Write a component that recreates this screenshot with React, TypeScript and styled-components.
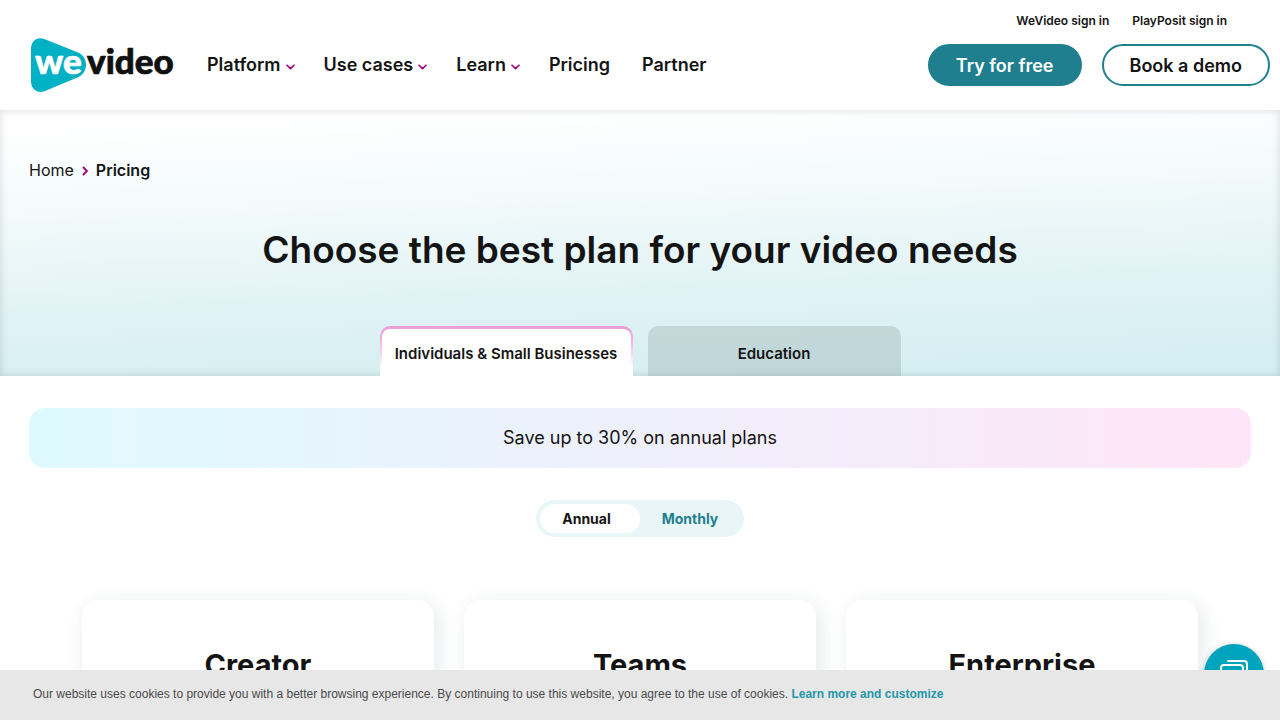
import React from 'react';
import styled, { createGlobalStyle } from 'styled-components';

const GlobalStyle = createGlobalStyle`
  * { box-sizing: border-box; }
  body {
    margin: 0;
    background: #fff;
    color: #141414;
    font-family: Inter, "Liberation Sans", sans-serif;
  }
  a { color: inherit; text-decoration: none; }
  button { font-family: inherit; color: inherit; cursor: pointer; }
`;

const Header = styled.header`
  display: flex;
  align-items: flex-start;
  height: 110px;
  padding: 0 10px 0 29px;
`;

const LogoLink = styled.a`
  display: block;
  margin: 36px 32px 0 0;
  svg { display: block; }
`;

const Nav = styled.nav`
  display: flex;
  gap: 32px;
  margin-top: 52px;
`;

const NavItem = styled.a<{ $menu?: boolean }>`
  display: flex;
  align-items: center;
  gap: 5px;
  margin-right: ${(p) => (p.$menu ? '-3px' : '0')};
  font-size: 18px;
  font-weight: 600;
  line-height: 26px;
  white-space: nowrap;
  svg { margin-top: 4px; }
`;

const HeaderSide = styled.div`
  margin-left: auto;
  display: flex;
  flex-direction: column;
  gap: 15px;
  padding-top: 13px;
`;

const SignIns = styled.div`
  display: flex;
  justify-content: flex-end;
  gap: 23px;
  padding-right: 43px;
  font-size: 12px;
  font-weight: 600;
  line-height: 16px;
`;

const Actions = styled.div`
  display: flex;
  justify-content: flex-end;
  gap: 20px;
`;

const PillButton = styled.button<{ $solid?: boolean }>`
  height: 42px;
  padding: 2px 26px 0;
  border: 2px solid #1f7f8e;
  border-radius: 21px;
  background: ${(p) => (p.$solid ? '#1f7f8e' : '#fff')};
  color: ${(p) => (p.$solid ? '#fff' : '#141414')};
  font-size: 18px;
  font-weight: 600;
  line-height: 24px;
  white-space: nowrap;
`;

const Hero = styled.section`
  display: flex;
  flex-direction: column;
  height: 266px;
  background: linear-gradient(178deg, #fff 6%, #f2fafb 35%, #e0f2f5 68%, #d5eff2 95%);
  box-shadow: inset 0 0 8px rgba(0, 0, 0, 0.14);
`;

const Breadcrumb = styled.nav`
  display: flex;
  align-items: center;
  gap: 8px;
  padding: 48px 29px 0;
  font-size: 16px;
  line-height: 24px;
  svg { margin-top: 2px; }
`;

const Current = styled.span`
  font-weight: 600;
`;

const Title = styled.h1`
  margin: 42px 0 0;
  text-align: center;
  font-size: 37px;
  font-weight: 600;
  line-height: 52px;
`;

const Tabs = styled.div`
  display: flex;
  justify-content: center;
  gap: 15px;
  margin-top: auto;
`;

const Tab = styled.button<{ $active?: boolean }>`
  width: 253px;
  height: 50px;
  padding: ${(p) => (p.$active ? '3px 2px 0' : '4px 0 0')};
  border: 0;
  border-radius: 10px 10px 0 0;
  background: ${(p) =>
    p.$active ? 'linear-gradient(#e99fd6, #f3b5e2 30%, #fff 85%)' : 'rgba(143, 158, 158, 0.3)'};
  font-size: 15px;
  font-weight: 600;
`;

const TabFace = styled.span`
  display: flex;
  align-items: center;
  justify-content: center;
  height: 100%;
  padding-top: 1px;
  border-radius: 8px 8px 0 0;
  background: #fff;
  white-space: nowrap;
`;

const Plans = styled.main`
  padding: 32px 29px 0;
`;

const Banner = styled.p`
  margin: 0;
  padding: 17px;
  border-radius: 16px;
  background: linear-gradient(90deg, #defaff, #ffe5f7);
  text-align: center;
  font-size: 18px;
  line-height: 26px;
`;

const Billing = styled.div`
  display: grid;
  grid-template-columns: 1fr 1fr;
  width: 208px;
  height: 37px;
  margin: 32px auto 0;
  padding: 4px;
  border-radius: 19px;
  background: #e8f6f7;
`;

const BillingOption = styled.button<{ $active?: boolean }>`
  padding: ${(p) => (p.$active ? '0 7px 0 0' : '0')};
  border: 0;
  border-radius: 15px;
  background: ${(p) => (p.$active ? '#fff' : 'transparent')};
  color: ${(p) => (p.$active ? '#141414' : '#1f7f8e')};
  font-size: 14px;
  font-weight: 700;
`;

const Cards = styled.div`
  display: grid;
  grid-template-columns: repeat(3, 1fr);
  gap: 30px;
  margin: 63px 53px 0;
`;

const Card = styled.article`
  height: 320px;
  padding-top: 44px;
  border-radius: 16px;
  background: #fff;
  box-shadow: 4px 4px 20px rgba(30, 80, 90, 0.12);
`;

const PlanName = styled.h2`
  margin: 0;
  text-align: center;
  font-size: 29px;
  font-weight: 700;
  line-height: 42px;
`;

const ChatButton = styled.button`
  position: fixed;
  right: 16px;
  bottom: 16px;
  width: 60px;
  height: 60px;
  padding: 0;
  border: 0;
  border-radius: 50%;
  background: #00a4bd;
  box-shadow: 0 1px 6px rgba(0, 0, 0, 0.2);
  svg { display: block; margin: auto; }
`;

const CookieBar = styled.aside`
  position: fixed;
  left: 0;
  right: 0;
  bottom: 0;
  min-height: 50px;
  padding: 16px 33px;
  background: #e7e7e7;
  color: #4a4a4a;
  font-family: "Liberation Sans", Arial, sans-serif;
  font-size: 12px;
  line-height: 16px;
  a { color: #1f97a8; font-weight: 700; }
`;

const Logo = () => (
  <svg width="146" height="58" viewBox="0 0 146 58" role="img" aria-label="WeVideo">
    <path
      d="M2 13C2 5 8 0 16 3.2L49 16.5C54 18.5 57 23 57 29C57 34.5 54 39 49 41.3L16 55C8 58 2 53 2 45Z"
      fill="#00b0c4"
    />
    <g fontFamily="Lato, sans-serif" fontWeight="900" fontSize="35" strokeWidth="0.7" strokeLinejoin="round">
      <text x="6" y="38" fill="#fff" stroke="#fff">we</text>
      <text x="58" y="38" fill="#101010" stroke="#101010">video</text>
    </g>
  </svg>
);

const Chevron = () => (
  <svg width="9" height="6" viewBox="0 0 9 6" fill="none" stroke="#a0007d" strokeWidth="1.6" aria-hidden="true">
    <path d="M1 1.2L4.5 4.6L8 1.2" strokeLinecap="round" strokeLinejoin="round" />
  </svg>
);

const Separator = () => (
  <svg width="6" height="10" viewBox="0 0 6 10" fill="none" stroke="#a0007d" strokeWidth="1.9" aria-hidden="true">
    <path d="M1 1L5 5L1 9" />
  </svg>
);

const navItems = [
  { label: 'Platform', menu: true },
  { label: 'Use cases', menu: true },
  { label: 'Learn', menu: true },
  { label: 'Pricing', menu: false },
  { label: 'Partner', menu: false },
];

export default function App() {
  return (
    <>
      <GlobalStyle />
      <Header>
        <LogoLink href="#"><Logo /></LogoLink>
        <Nav aria-label="Main">
          {navItems.map((item) => (
            <NavItem href="#" key={item.label} $menu={item.menu}>
              {item.label}
              {item.menu && <Chevron />}
            </NavItem>
          ))}
        </Nav>
        <HeaderSide>
          <SignIns>
            <a href="#">WeVideo sign in</a>
            <a href="#">PlayPosit sign in</a>
          </SignIns>
          <Actions>
            <PillButton $solid>Try for free</PillButton>
            <PillButton>Book a demo</PillButton>
          </Actions>
        </HeaderSide>
      </Header>
      <Hero>
        <Breadcrumb aria-label="Breadcrumb">
          <a href="#">Home</a>
          <Separator />
          <Current>Pricing</Current>
        </Breadcrumb>
        <Title>Choose the best plan for your video needs</Title>
        <Tabs role="tablist">
          <Tab role="tab" aria-selected="true" $active>
            <TabFace>Individuals &amp; Small Businesses</TabFace>
          </Tab>
          <Tab role="tab" aria-selected="false">Education</Tab>
        </Tabs>
      </Hero>
      <Plans>
        <Banner>Save up to 30% on annual plans</Banner>
        <Billing>
          <BillingOption $active aria-pressed="true">Annual</BillingOption>
          <BillingOption aria-pressed="false">Monthly</BillingOption>
        </Billing>
        <Cards>
          {['Creator', 'Teams', 'Enterprise'].map((name) => (
            <Card key={name}>
              <PlanName>{name}</PlanName>
            </Card>
          ))}
        </Cards>
      </Plans>
      <ChatButton aria-label="Open chat">
        <svg width="30" height="30" viewBox="0 0 30 30" fill="none" stroke="#fff" strokeWidth="2" strokeLinecap="round" strokeLinejoin="round">
          <path d="M9 2H25Q28 2 28 5V17" />
          <path d="M5 6H21Q24 6 24 9V19Q24 22 21 22H13L8 27V22H5Q2 22 2 19V9Q2 6 5 6Z" />
        </svg>
      </ChatButton>
      <CookieBar>
        Our website uses cookies to provide you with a better browsing experience. By continuing to use this website, you
        agree to the use of cookies. <a href="#">Learn more and customize</a>
      </CookieBar>
    </>
  );
}
